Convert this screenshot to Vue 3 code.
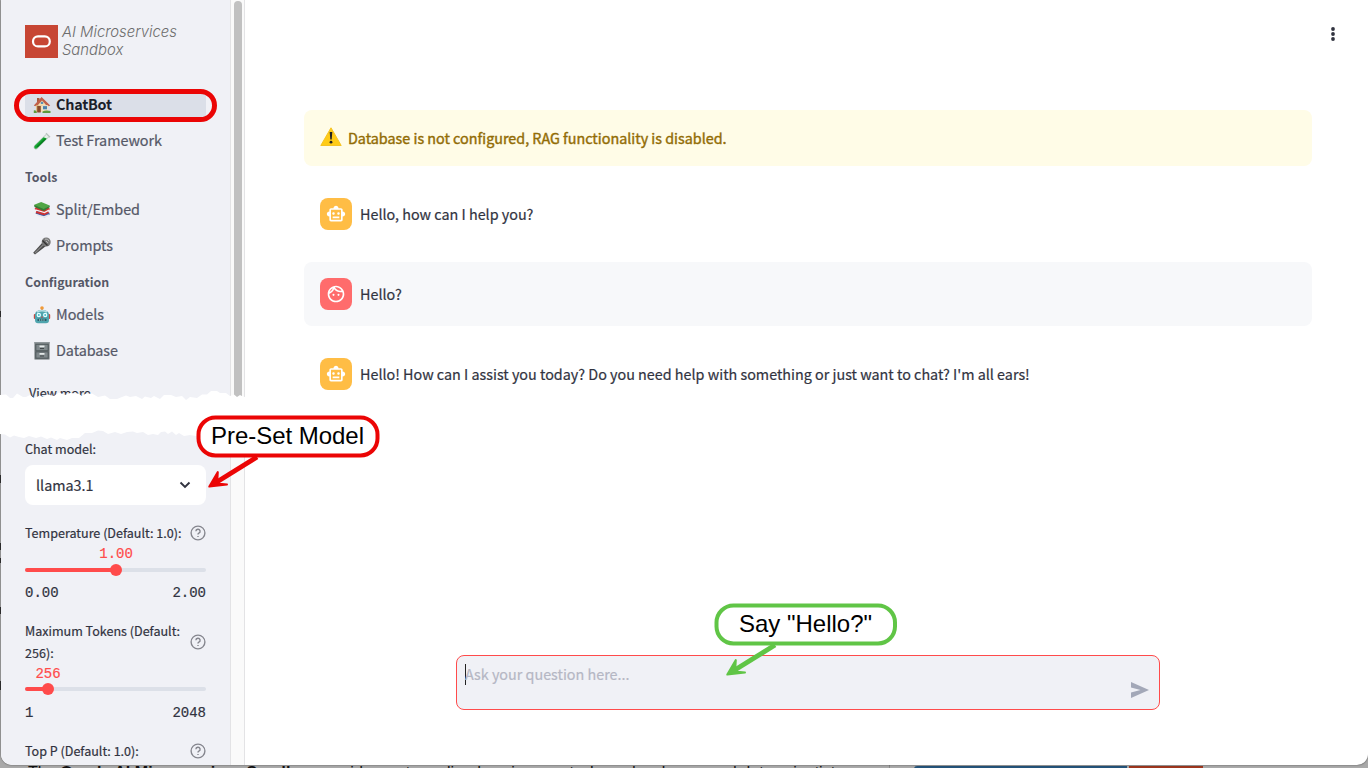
<script setup>
const groups = [
  { title: '', items: [{ label: 'ChatBot', icon: 'house', active: true, w: 56 }, { label: 'Test Framework', icon: 'tube', w: 106 }] },
  { title: 'Tools', items: [{ label: 'Split/Embed', icon: 'books', w: 84 }, { label: 'Prompts', icon: 'mic', w: 57 }] },
  { title: 'Configuration', items: [{ label: 'Models', icon: 'robot', w: 48 }, { label: 'Database', icon: 'cabinet', w: 62 }] },
]
const sliders = [
  { lines: ['Temperature (Default: 1.0):'], value: '1.00', pct: 50.3, min: '0.00', max: '2.00' },
  { lines: ['Maximum Tokens (Default:', '256):'], value: '256', pct: 12.7, min: '1', max: '2048' },
]
const messages = [
  { who: 'bot', text: 'Hello, how can I help you?' },
  { who: 'user', text: 'Hello?' },
  { who: 'bot', text: "Hello! How can I assist you today? Do you need help with something or just want to chat? I'm all ears!" },
]
</script>

<template>
  <div class="desktop">
    <div class="window">
      <aside class="sidebar">
        <div class="brand">
          <svg class="logo" viewBox="0 0 33 33"><rect width="33" height="33" fill="#c74634" /><rect x="8" y="11.4" width="16.8" height="10" rx="5" fill="none" stroke="#fff" stroke-width="2.2" /></svg>
          <div class="brand-text">AI Microservices<br />Sandbox</div>
        </div>

        <nav>
          <template v-for="g in groups" :key="g.title">
            <h4 v-if="g.title">{{ g.title }}</h4>
            <div v-for="i in g.items" :key="i.label" class="item" :class="{ active: i.active }">
              <div class="link">
                <svg v-if="i.icon === 'house'" viewBox="0 0 18 18">
                  <path d="M3 7.5 9 3l6 4.500V16H3z" fill="#f3deb0" /><path d="M3 7.500h3V16H3z" fill="#dfbd83" />
                  <path d="M4 2h2.500v5H4z" fill="#a55a3c" /><path d="M.8 9.500 8.600 1 17.200 9.500l-1.500.8-1-1H3.300l-1 1z" fill="#c0604a" /><path d="M4.500 9.500 9 4.500l4.500 5z" fill="#f3deb0" />
                  <rect x="4.200" y="10" width="3.600" height="6.500" fill="#8a4b2c" /><rect x="9.700" y="9.800" width="4.600" height="4" fill="#4d82ad" stroke="#fff8e5" stroke-width=".6" />
                  <path d="M7.800 5.800h2.400v2.200H7.800z" fill="#5b8fb5" /><path d="M.8 14.500q2-1 3 1.500v1H.8zM9.500 15.500q3-1.500 8-.5v2h-8z" fill="#5f9a3c" />
                </svg>
                <svg v-else-if="i.icon === 'tube'" viewBox="0 0 18 18">
                  <path d="M13.300 2.300 1.500 13.800q-1.300 3.700 2.200 3.200L16 4.600" fill="#e5efe8" stroke="#a9b8b1" stroke-width=".8" />
                  <path d="M10.500 5.300 1.500 14q-.8 3.200 2.200 2.600L13.800 6.500z" fill="#14a532" /><path d="m4 15 8.500-8.300" stroke="#087d20" stroke-width="1.500" /><path d="m13 1.200 4 4" stroke="#b5c2bd" stroke-width="1.300" />
                </svg>
                <svg v-else-if="i.icon === 'books'" viewBox="0 0 18 18">
                  <path d="m2.500 12.500 9 4 5-2.800v-2L4 10z" fill="#3e5ea8" /><path d="m4 14 7 2 5-2" fill="none" stroke="#e8e8ee" stroke-width="1.800" />
                  <path d="m1.500 8 9.500 4.500L16.500 9V7L3 6z" fill="#cf3333" /><path d="m3 11 8 2 4.500-2" fill="none" stroke="#cf3333" stroke-width="2.200" /><path d="m3 9 8.500 2.500 4.500-2.300" fill="none" stroke="#f3eeee" stroke-width="1.300" />
                  <path d="m1.200 3.700 7-2.700 8.500 3.500-6 4.200-9-3.500z" fill="#4fa545" /><path d="m1.200 4 9.500 4 6-3.500v1.800l-6 3.700L1.500 6z" fill="#347c35" />
                </svg>
                <svg v-else-if="i.icon === 'mic'" viewBox="0 0 18 18">
                  <path d="M9.500 5.500.2 15.800l1.800 1.800L13 9z" fill="#4b4b4b" /><path d="m10.500 7.500-8.500 8.500" stroke="#858585" stroke-width="1.200" /><circle cx="13.200" cy="5" r="4.500" fill="#777" />
                  <path d="m9.500 3.500 5 5" stroke="#333" stroke-width="1.400" /><path d="M12 2.200q3-1 4 2M13 4l2 2" stroke="#bbb" stroke-width=".9" fill="none" />
                </svg>
                <svg v-else-if="i.icon === 'robot'" viewBox="0 0 18 18">
                  <path d="M9 1.500v4" stroke="#7999a0" stroke-width="1.200" /><circle cx="9" cy="2" r="1.800" fill="#f19a37" /><rect x=".8" y="8" width="16.400" height="5" rx="1" fill="#c74a42" />
                  <path d="M2 9q0-5 7-5t7 5v5q0 3.300-3 3.300H5q-3 0-3-3.300z" fill="#4fa5ae" /><path d="M4 6q5-2.500 10 0" stroke="#b9dfe3" stroke-width="1.500" fill="none" />
                  <circle cx="5.800" cy="9" r="2.200" fill="#e5ffff" /><circle cx="12.200" cy="9" r="2.200" fill="#e5ffff" /><circle cx="5.800" cy="9" r="1" fill="#49bcc9" /><circle cx="12.200" cy="9" r="1" fill="#49bcc9" /><path d="m9 10-1 1.700h2z" fill="#cd3d37" /><rect x="4.500" y="12.800" width="9" height="2.300" rx=".7" fill="#275e68" /><path d="M6 14h6" stroke="#c6e8e7" stroke-width="1" stroke-dasharray="1 .8" />
                </svg>
                <svg v-else viewBox="0 0 18 18">
                  <path d="M1.500 0h15v17.500h-15z" fill="#626a6d" /><path d="M1.500 0h15v1.500h-15z" fill="#8f979a" /><path d="M3 2.500h12v6H3zM3 10h12v6H3z" fill="#7f888b" stroke="#4c5557" stroke-width=".6" />
                  <path d="M6.500 3.500h5v1.700h-5zM6.500 11h5v1.700h-5z" fill="#e5eaea" /><path d="M7 6.500h4M7 14h4" stroke="#404749" />
                </svg>
                <svg class="label" :width="i.w" height="28"><text x="0" y="19.300" :textLength="i.w">{{ i.label }}</text></svg>
              </div>
            </div>
          </template>
          <div class="more">View more</div>
        </nav>

        <section class="settings">
          <div class="field">Chat model:</div>
          <div class="select"><span>llama3.1</span><svg viewBox="0 0 12 12" width="12" height="12"><path d="m1.500 3.500 4.500 4.500 4.500-4.500" fill="none" stroke="#31333f" stroke-width="1.900" /></svg></div>
          <div v-for="s in sliders" :key="s.value" class="slider">
            <div class="field row">
              <div><div v-for="l in s.lines" :key="l">{{ l }}</div></div>
              <svg class="help" viewBox="0 0 16 16"><circle cx="8" cy="8" r="6.900" /><path d="M5.900 6.300a2.100 2.100 0 1 1 3 1.900c-.7.400-.9.700-.9 1.300M8 11v1" /></svg>
            </div>
            <div class="value"><span :style="{ left: s.pct + '%' }">{{ s.value }}</span></div>
            <div class="track"><i :style="{ width: s.pct + '%' }"></i><b :style="{ left: s.pct + '%' }"></b></div>
            <div class="ends"><span>{{ s.min }}</span><span>{{ s.max }}</span></div>
          </div>
          <div class="field row last">
            <div>Top P (Default: 1.0):</div>
            <svg class="help" viewBox="0 0 16 16"><circle cx="8" cy="8" r="6.900" /><path d="M5.900 6.300a2.100 2.100 0 1 1 3 1.900c-.7.400-.9.700-.9 1.300M8 11v1" /></svg>
          </div>
        </section>
      </aside>
      <div class="scroll"><div class="thumb"></div></div>

      <main>
        <header><svg width="6" height="16" viewBox="0 0 6 16"><circle cx="3" cy="3" r="1.900" /><circle cx="3" cy="8" r="1.900" /><circle cx="3" cy="13" r="1.900" /></svg></header>
        <div class="alert">
          <svg width="22" height="20" viewBox="0 0 22 20"><path d="M11 .8 21.200 18.500H.8z" fill="#ffcb16" stroke="#f5c323" stroke-width="1" stroke-linejoin="round" /><path d="M9.700 5h2.600l-.6 7.500h-1.400z" fill="#222" /><circle cx="11" cy="15.200" r="1.400" fill="#222" /></svg>
          <span>Database is not configured, RAG functionality is disabled.</span>
        </div>
        <div v-for="m in messages" :key="m.text" class="message" :class="m.who">
          <div class="avatar">
            <svg v-if="m.who === 'bot'" viewBox="0 0 24 24" width="20" height="20"><path fill="#fff" d="M20 9V7c0-1.100-.9-2-2-2h-3c0-1.660-1.340-3-3-3S9 3.340 9 5H6c-1.100 0-2 .9-2 2v2c-1.660 0-3 1.340-3 3s1.340 3 3 3v4c0 1.100.9 2 2 2h12c1.100 0 2-.9 2-2v-4c1.660 0 3-1.340 3-3s-1.340-3-3-3zm-2 10H6V7h12v12zm-9-6c-.83 0-1.500-.67-1.500-1.500S8.170 10 9 10s1.500.67 1.500 1.500S9.830 13 9 13zm7.500-1.500c0 .83-.67 1.500-1.500 1.500s-1.500-.67-1.500-1.500.67-1.500 1.500-1.500 1.500.67 1.500 1.500zM8 15h8v2H8v-2z" /></svg>
            <svg v-else viewBox="0 0 24 24" width="20" height="20"><path fill="#fff" d="M10.250 13a1.250 1.250 0 1 1-2.500 0 1.250 1.250 0 0 1 2.500 0zM15 11.750a1.250 1.250 0 1 0 0 2.500 1.250 1.250 0 0 0 0-2.500zm7 .25c0 5.520-4.480 10-10 10S2 17.520 2 12 6.480 2 12 2s10 4.480 10 10zM10.660 4.120C12.060 6.440 14.600 8 17.500 8c.46 0 .91-.05 1.340-.12C17.440 5.560 14.900 4 12 4c-.46 0-.91.05-1.340.12zM4.420 9.470c1.710-.97 3.030-2.550 3.660-4.440-1.710.97-3.030 2.550-3.660 4.440zM20 12c0-.78-.12-1.530-.33-2.240-.7.150-1.420.24-2.170.24-3.130 0-5.920-1.440-7.760-3.690C8.690 8.870 6.600 10.880 4 11.860c.01.04 0 .09 0 .14 0 4.420 3.580 8 8 8s8-3.580 8-8z" /></svg>
          </div>
          <p>{{ m.text }}</p>
        </div>
        <div class="prompt">
          <span class="caret"></span><span class="placeholder">Ask your question here...</span>
          <svg viewBox="0 0 18 16" width="18" height="16"><path d="M0 0 18 8 0 16V10.500L9.500 8 0 5.500z" fill="#a3a8b8" /></svg>
        </div>
      </main>
    </div>

    <div class="backdrop">
      <div class="doc">The <strong>Oracle AI Microservices Sandbox</strong> provides a streamlined environment where developers and data scientists</div>
      <div class="blue"></div><div class="rust"></div>
    </div>

    <svg class="overlay" width="1368" height="768" viewBox="0 0 1368 768">
      <path fill="#fff" d="M0 395 6 394.500 10 398 13 398 17 393.500 23 397 26 397 30 395 34 398 40 395.500 43 397 48 394.500 54 396 59 392.500 65 395 70 393 78 393.500 82 396 85 394 92 393.500 98 397 105 395.500 110 399 117 399 122 397 126 395.500 130 397 136 396 142 399 145 396.500 151 398 154 396 160 399 164 395 171 395 176 397 182 396 186 400 190 397 197 398 202 394.500 207 394.500 211 391 217 391 220 393 226 393 230 396 234 394.500 237 397 240 395 243 396.500 245 397V436L238 434 232 435 226 433 219 435 211 432 208 434 201 433 196 436 190 435 184 436 179 433 176 435 172 431.500 168 434 165 431.500 161 432 158 435 153 434 148 435 143 432 137 433 133 431.500 127 432 121 434 115 432 108 434 103 431 98 430.500 92 433 85 433 79 438 72 438 67 440 60 438 57 440 51 437.500 47 439 41 436.500 36 438 29 436 24 438 19 437 14 435.500 10 437.500 5 434.500 0 434z" />
      <g fill="none" stroke="#eb0505" stroke-width="4">
        <rect x="16.500" y="91.500" width="198" height="28" rx="14" stroke-width="5" />
        <rect x="198.500" y="417.500" width="179" height="38" rx="17" fill="#fff" />
      </g>
      <g class="arrow red"><path class="shaft" d="M257 457 216 482.500" /><path class="tip" d="M209.300 486.600 217.800 472 217.300 480.800 219.300 483.800 227 484.500z" /></g>
      <rect x="716.500" y="605.500" width="178.500" height="38" rx="17" fill="#fff" stroke="#60c546" stroke-width="4" />
      <g class="arrow green" transform="translate(518 188)"><path class="shaft" d="M257 457 216 482.500" /><path class="tip" d="M209.300 486.600 217.800 472 217.300 480.800 219.300 483.800 227 484.500z" /></g>
      <g class="callout"><text x="211" y="444" textLength="153">Pre-Set Model</text><text x="739" y="632" textLength="133">Say "Hello?"</text></g>
    </svg>
  </div>
</template>

<style>
body { margin: 0; overflow: hidden; }
</style>

<style scoped>
* { box-sizing: border-box; }
.desktop { position: relative; width: 1368px; height: 768px; overflow: hidden; background: #a9a9a9; font-family: "Noto Sans CJK SC", "Noto Sans", sans-serif; font-size: 14.350px; color: #31333f; }
.window { position: relative; z-index: 1; display: flex; margin-left: 1px; height: 765px; background: #fff; border-radius: 0 0 11px 11px; overflow: hidden; box-shadow: 0 0 2px rgba(0,0,0,.55); -webkit-text-stroke: .2px; }
.sidebar { width: 229px; padding: 0 24px; background: #f0f1f6; flex: none; }
.scroll { width: 15px; background: #fafafa; border: solid #e3e3e5; border-width: 0 1px; padding: 1px 3px 0; flex: none; }
.thumb { width: 8px; height: 400px; background: #c1c1c1; border-radius: 4px; }
.brand { height: 87px; padding-top: 25px; display: flex; gap: 4px; align-items: flex-start; }
.logo { width: 33px; height: 33px; flex: none; }
.brand-text { font: italic 300 14.850px/18px Inter, Lato, sans-serif; color: #6d6d6d; white-space: nowrap; margin-top: -2px; -webkit-text-stroke: 0; }
.item { height: 36px; padding: 4px 0; }
.link { height: 28px; display: flex; align-items: center; padding-left: 8px; gap: 4.500px; border-radius: 4px; }
.link > svg:first-child { width: 18px; height: 18px; flex: none; }
.label text { font-size: 14.400px; fill: #555867; stroke: #555867; stroke-width: .2px; -webkit-text-stroke: 0; }
.label { overflow: visible; }
.active .link { background: #dbdfe8; }
.active .label text { font-weight: 700; fill: #1c1e2a; stroke: none; }
h4 { margin: 0; height: 33px; padding-top: 3px; font-size: 12.400px; line-height: 30px; color: #555867; -webkit-text-stroke: 0; }
.more { height: 48px; line-height: 48px; padding-left: 4px; font-size: 12.600px; }
.settings { padding-top: 21px; }
.field { font-size: 12.550px; line-height: 22px; white-space: nowrap; }
.select { margin: 5px 0 17px; height: 40px; border-radius: 8px; background: #fff; display: flex; align-items: center; justify-content: space-between; padding: 0 15px 0 11px; }
.select span { margin-top: -2px; }
.row { display: flex; justify-content: space-between; align-items: center; }
.help { width: 16px; height: 16px; fill: none; stroke: #85868e; stroke-width: 1.400; flex: none; }
.slider { height: 98px; }
.slider:nth-of-type(4) { height: 120px; }
.value, .ends { font-family: "Liberation Mono", monospace; font-size: 14px; line-height: 20px; }
.value { height: 18px; position: relative; color: #ff4b4b; }
.value span { position: absolute; transform: translateX(-50%); }
.track { height: 4px; margin: 6px 0 9px; background: #dce0e8; border-radius: 2px; position: relative; }
.slider:nth-of-type(4) .track { margin: 5px 0 10px; }
.track i { display: block; height: 4px; border-radius: 2px; background: #ff4b4b; }
.track b { position: absolute; width: 12px; height: 12px; top: -4px; margin-left: -6px; border-radius: 50%; background: #ff4b4b; }
.ends { display: flex; justify-content: space-between; line-height: 24px; height: 22px; }
main { flex: 1; padding: 0 56px 0 59px; min-width: 0; }
header { height: 110px; padding-top: 26px; display: flex; justify-content: flex-end; margin-right: -24px; fill: #31333f; }
header svg { display: block; }
.alert { height: 56px; background: #fffce7; color: #926c05; border-radius: 8px; display: flex; align-items: center; gap: 6px; padding: 0 0 2px 16px; -webkit-text-stroke: .4px; margin-bottom: 16px; }
.message { height: 64px; margin-bottom: 16px; border-radius: 8px; display: flex; align-items: center; gap: 8px; padding: 0 16px; }
.message.user { background: #f7f8fa; }
.message p { margin: -2px 0 0; white-space: nowrap; }
.avatar { width: 32px; height: 32px; border-radius: 8px; background: #ffbd45; display: flex; align-items: center; justify-content: center; }
.user .avatar { background: #ff6c6c; }
.prompt { margin: 249px 152px 0; height: 55px; border: 1px solid #ff4b4b; border-radius: 8px; background: #f0f1f6; display: flex; padding: 8px 10px 0 8px; }
.caret { width: 1px; height: 21px; background: #222; margin-right: -1px; }
.placeholder { color: #b5b7c4; line-height: 20px; flex: 1; }
.prompt svg { margin-top: 18px; }
.backdrop { position: absolute; inset: 0; background: linear-gradient(#333, #333) 0 311px / 1px 6px no-repeat, linear-gradient(#333, #333) 0 475px / 1px 8px no-repeat, linear-gradient(#333, #333) 0 543px / 1px 7px no-repeat, linear-gradient(#333, #333) 0 558px / 1px 5px no-repeat, linear-gradient(#333, #333) 0 607px / 1px 7px no-repeat, linear-gradient(#333, #333) 0 681px / 1px 9px no-repeat, #a9a9a9; display: flex; padding-top: 766px; }
.doc { width: 890px; flex: none; height: 20px; padding-left: 28px; border-right: 1px solid #888; font: 16.100px/18px "Liberation Sans", sans-serif; margin-top: -3px; white-space: nowrap; color: #111; }
.blue { width: 213px; margin-left: 24px; height: 10px; flex: none; background: #23537a; border-radius: 3px 0 0; }
.rust { width: 74px; margin-left: 2px; height: 10px; flex: none; background: #9d351d; }
.overlay { position: absolute; inset: 0; z-index: 2; }
.shaft { stroke-width: 5; }
.tip { stroke-width: 2; stroke-linejoin: round; }
.red { fill: #eb0505; stroke: #eb0505; }
.green { fill: #60c546; stroke: #60c546; }
.callout { font: 24px "Liberation Sans", Arial, sans-serif; fill: #000; }
</style>
